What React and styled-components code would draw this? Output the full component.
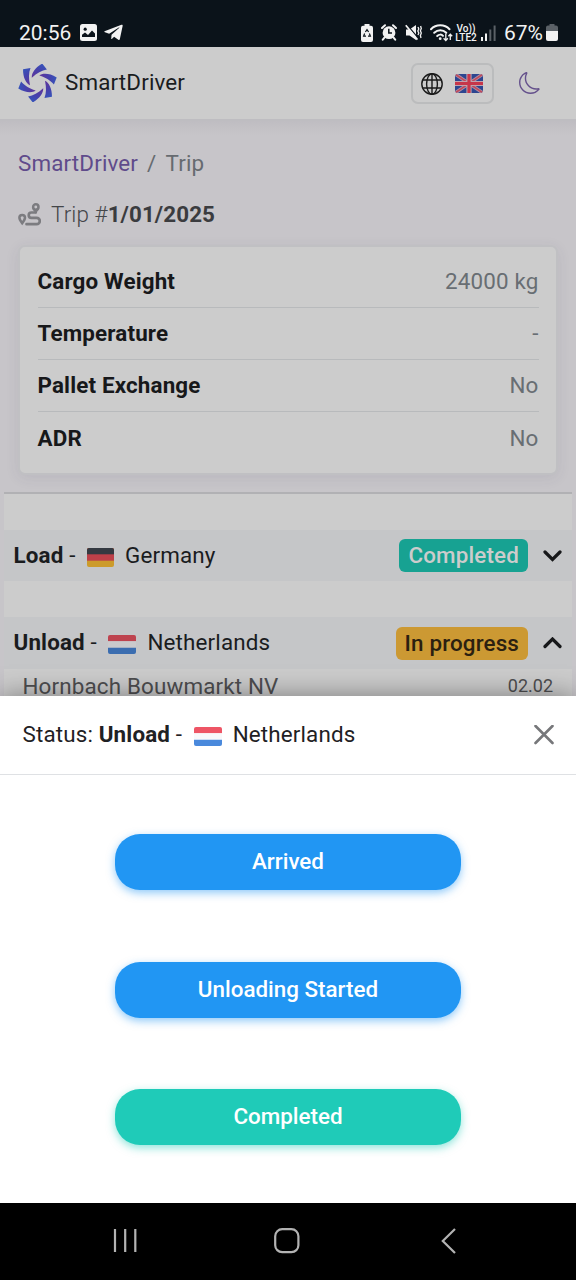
import React from "react";
import styled, { createGlobalStyle } from "styled-components";
import { FaTelegramPlane } from "react-icons/fa";
import { BsMoon } from "react-icons/bs";

const GlobalStyle = createGlobalStyle`
  * {
    box-sizing: border-box;
  }
  body {
    margin: 0;
    font-family: Roboto, sans-serif;
    font-size: 22.4px;
    letter-spacing: 0.15px;
    line-height: 1.5;
    color: #1a1c1e;
  }
`;

const Screen = styled.div`
  display: flex;
  flex-direction: column;
  width: 576px;
  height: 1280px;
  overflow: hidden;
`;

const StatusBar = styled.div`
  display: flex;
  align-items: center;
  flex: 0 0 47px;
  padding: 18px 18px 0 19px;
  background: #0b131a;
  color: #f2f2f2;
  font-size: 21px;
  letter-spacing: 0;
  line-height: 28px;
  svg {
    display: block;
    flex: none;
  }
`;

const Clock = styled.span`
  width: 61px;
`;

const StatusIcons = styled.div`
  display: flex;
  align-items: center;
  gap: ${({ gap }) => gap}px;
`;

const Battery = styled.div`
  display: flex;
  align-items: center;
  margin-left: auto;
  gap: 4px;
`;

const BatteryLevel = styled.span`
  width: 38px;
  margin-left: 4px;
`;

const Header = styled.header`
  display: flex;
  align-items: center;
  flex: 0 0 74px;
  padding: 0 35px 0 18px;
  background: #cccccc;
  border-bottom: 2px solid #bebdc1;
`;

const Brand = styled.span`
  margin-left: 8px;
`;

const LanguageButton = styled.button`
  display: flex;
  align-items: center;
  justify-content: space-between;
  width: 83px;
  height: 41px;
  margin-top: 1px;
  margin-left: auto;
  margin-right: 25px;
  padding: 0 9px 0 8px;
  background: transparent;
  border: 2px solid #bbbcbd;
  border-radius: 7px;
`;

const Content = styled.main`
  flex: 0 0 575px;
  overflow: hidden;
  background: linear-gradient(#bfbdc2, #c7c5c9 14px);
`;

const Breadcrumb = styled.nav`
  display: flex;
  gap: 9px;
  padding: 26px 18px 0;
  color: #666b70;
  a {
    color: #5f4b8b;
  }
`;

const TripTitle = styled.div`
  display: flex;
  align-items: center;
  padding: 17px 18px 0;
  letter-spacing: 0.1px;
  font-weight: 300;
  color: #444649;
  svg {
    margin-right: 10px;
  }
  b {
    font-weight: 700;
    color: #3b3c3f;
  }
`;

const Card = styled.section`
  height: 230px;
  margin: 14px 18px 0;
  padding: 8.5px 17.5px;
  background: #cccccc;
  border: 2px solid #c0c0c3;
  border-radius: 7px;
  box-shadow: 0 3px 14px rgba(60, 50, 90, 0.09);
`;

const CardRow = styled.div`
  display: flex;
  align-items: center;
  justify-content: space-between;
  height: 52.2px;
  border-bottom: 1.4px solid #b8babc;
  &:last-child {
    border-bottom: 0;
  }
  b {
    color: #17181a;
  }
  span {
    color: #686e73;
  }
`;

const Stops = styled.section`
  margin: 17px 4px 0;
  border-top: 2px solid #b1b1b4;
  background: #cccccc;
`;

const StopRow = styled.div`
  display: flex;
  align-items: center;
  height: ${({ height }) => height}px;
  margin-top: 36px;
  padding: 0 10px 0 9.5px;
  background: #c5c6c8;
`;

const Place = styled.span`
  display: flex;
  align-items: center;
  white-space: pre;
  svg {
    margin: 3px 11px 0 11.5px;
  }
`;

const Chip = styled.span`
  height: 33px;
  margin-left: auto;
  margin-right: 15px;
  padding: 0 9px;
  border-radius: 6px;
  font-weight: 500;
  line-height: 32px;
  background: ${({ tone }) => (tone === "done" ? "#17a292" : "#cc9933")};
  color: ${({ tone }) => (tone === "done" ? "#cccccc" : "#2b2010")};
`;

const StopDetails = styled.div`
  display: flex;
  align-items: center;
  justify-content: space-between;
  height: 27px;
  padding: 7px 19px 0 18.5px;
  line-height: 20px;
  color: #4e4e50;
  small {
    font-size: 18px;
    letter-spacing: 0;
  }
`;

const Sheet = styled.section`
  position: relative;
  flex: 0 0 507px;
  background: #ffffff;
  box-shadow: 0 0 26px rgba(0, 0, 0, 0.4);
`;

const SheetHeader = styled.div`
  display: flex;
  align-items: center;
  justify-content: space-between;
  height: 79px;
  padding: 0 22px 0 22.5px;
  border-bottom: 1.5px solid #dfe1e4;
  color: #1f2124;
`;

const Actions = styled.div`
  display: flex;
  flex-direction: column;
  align-items: center;
  gap: 71.7px;
  padding-top: 59px;
`;

const ActionButton = styled.button`
  width: 346px;
  height: 56px;
  padding: 0 0 2px;
  border: 0;
  border-radius: 25px;
  font: 500 22.4px Roboto, sans-serif;
  color: #ffffff;
  background: ${({ tone }) => (tone === "done" ? "#1fcbb8" : "#2196f3")};
  box-shadow: 0 3px 9px
    ${({ tone }) =>
      tone === "done" ? "rgba(31, 203, 184, 0.5)" : "rgba(33, 150, 243, 0.5)"};
`;

const NavBar = styled.footer`
  display: flex;
  align-items: center;
  justify-content: space-between;
  flex: 0 0 77px;
  padding: 0 120px 1px 113px;
  background: #000000;
`;

const blades = [0, 60, 120, 180, 240, 300];

const Logo = () => (
  <svg width="39" height="38" viewBox="-19.5 -19 39 38">
    <defs>
      <linearGradient id="blade" x1="1" y1="0" x2="0" y2="0">
        <stop offset="0" stopColor="#3655ba" />
        <stop offset="0.4" stopColor="#4442ad" />
        <stop offset="1" stopColor="#60359a" />
      </linearGradient>
    </defs>
    {blades.map((angle) => (
      <path
        key={angle}
        transform={`rotate(${angle})`}
        d="M1.8 -7.6 C5 -10 12 -10 19.2 -5.6 L16.4 1.4 C13 -2.8 8.5 -5.4 1.8 -7.6Z"
        fill="url(#blade)"
      />
    ))}
  </svg>
);

const GlobeIcon = () => (
  <svg width="22" height="22" viewBox="0 0 22 22">
    <g fill="none" stroke="#1a1a1a" strokeWidth="1.4">
      <circle cx="11" cy="11" r="10.2" />
      <ellipse cx="11" cy="11" rx="5.4" ry="10.2" />
      <path d="M11 0.8V21.2M1.7 7H20.3M1.7 15H20.3" />
    </g>
  </svg>
);

const FlagDe = () => (
  <svg width="27" height="19" viewBox="0 0 27 19">
    <clipPath id="de">
      <rect width="27" height="19" rx="2" />
    </clipPath>
    <g clipPath="url(#de)">
      <rect width="27" height="19" fill="#cc9b2b" />
      <rect width="27" height="12.7" fill="#bd4049" />
      <rect width="27" height="6.3" fill="#343941" />
    </g>
  </svg>
);

const FlagNl = ({ dim }) => (
  <svg width="28" height="19" viewBox="0 0 28 19">
    <path
      d="M2 0H26A2 2 0 0 1 28 2V6.3H0V2A2 2 0 0 1 2 0Z"
      fill={dim ? "#be434f" : "#ee5565"}
    />
    <rect y="6.3" width="28" height="6.4" fill={dim ? "#cacacc" : "#f8f8fa"} />
    <path
      d="M0 12.7H28V17A2 2 0 0 1 26 19H2A2 2 0 0 1 0 17Z"
      fill={dim ? "#3b6db0" : "#4a89dc"}
    />
  </svg>
);

const FlagGb = () => (
  <svg width="28" height="19" viewBox="0 0 28 19">
    <clipPath id="gb">
      <rect width="28" height="19" rx="3" />
    </clipPath>
    <g clipPath="url(#gb)">
      <rect width="28" height="19" fill="#2c4590" />
      <path d="M0 0L28 19M28 0L0 19" stroke="#b08fa2" strokeWidth="3.4" />
      <path d="M0 0L28 19M28 0L0 19" stroke="#c0485a" strokeWidth="1.5" />
      <path d="M14 0V19M0 9.5H28" stroke="#c0a3ae" strokeWidth="5.2" />
      <path d="M14 0V19M0 9.5H28" stroke="#c7364a" strokeWidth="3.2" />
    </g>
  </svg>
);

const RouteIcon = () => (
  <svg width="23" height="23" viewBox="0 0 23 23" fill="none" stroke="#7c7c80">
    <path
      d="M4.2 20.2C2.4 17.8 1.4 16.3 1.4 14.7A2.8 2.8 0 0 1 7 14.7C7 16.3 6 17.8 4.2 20.2Z"
      strokeWidth="2.5"
    />
    <circle cx="17.8" cy="4" r="2.7" strokeWidth="2.5" />
    <path
      d="M17.8 9.5H13.4A2.4 2.4 0 0 0 13.4 14.8H18.6A3.1 3.1 0 0 1 18.6 21.2H8.5"
      strokeWidth="2.7"
      strokeLinecap="round"
    />
    <path d="M15.6 6L17.8 9L20 6" strokeWidth="2" />
  </svg>
);

const Chevron = ({ up }) => (
  <svg width="19" height="13" viewBox="0 0 19 13">
    <path
      d={up ? "M2 9.5L9.5 2L17 9.5" : "M2 3L9.5 10.5L17 3"}
      fill="none"
      stroke="#17181a"
      strokeWidth="3.2"
      strokeLinecap="round"
    />
  </svg>
);

const CloseIcon = () => (
  <svg width="20" height="20" viewBox="0 0 20 20">
    <path
      d="M1.5 1L18.5 18M18.5 1L1.5 18"
      stroke="#76777a"
      strokeWidth="2.6"
      strokeLinecap="round"
    />
  </svg>
);

const GalleryIcon = () => (
  <svg width="17" height="17" viewBox="0 0 17 17">
    <rect width="17" height="17" rx="2.5" fill="#f2f2f2" />
    <circle cx="5.2" cy="5.2" r="1.6" fill="#0b131a" />
    <path d="M2 13V10.8L5 8.5L8 11L12 6.5L15 9.5V13Z" fill="#0b131a" />
  </svg>
);

const BatterySaverIcon = () => (
  <svg width="12" height="18" viewBox="0 0 12 18">
    <path
      d="M3.5 0H8.5V1.8H10A2 2 0 0 1 12 3.8V16A2 2 0 0 1 10 18H2A2 2 0 0 1 0 16V3.8A2 2 0 0 1 2 1.8H3.5Z"
      fill="#f2f2f2"
    />
    <path
      d="M4.4 8L6 5.6L7.6 8M8.4 9.5L9.4 12.2H7M5 12.2H2.6L3.6 9.5"
      fill="none"
      stroke="#0b131a"
      strokeWidth="1.2"
    />
  </svg>
);

const AlarmIcon = () => (
  <svg width="16" height="17" viewBox="0 0 16 17">
    <circle cx="8" cy="8.7" r="6.4" fill="#f2f2f2" />
    <path
      d="M1 4L4 1.2M15 4L12 1.2M3.4 13.6L1.8 15.6M12.6 13.6L14.2 15.6"
      stroke="#f2f2f2"
      strokeWidth="2"
      strokeLinecap="round"
    />
    <path d="M7.8 4.8V9H11" fill="none" stroke="#0b131a" strokeWidth="1.5" />
  </svg>
);

const MuteIcon = () => (
  <svg width="17" height="17" viewBox="0 0 17 17">
    <path d="M1 5.5H4.5L11 1V16L4.5 11.5H1Z" fill="#f2f2f2" />
    <path d="M1.4 0L13.4 14.5" stroke="#0b131a" strokeWidth="1.3" />
    <path d="M0.8 1.2L12.4 15.6" stroke="#f2f2f2" strokeWidth="1.7" />
    <path
      d="M13 3L13.8 5L12.8 7L13.8 9L13 11M15.6 2L16.3 4.5L15.4 6.8L16.3 9L15.4 11.5L16 14"
      fill="none"
      stroke="#f2f2f2"
      strokeWidth="1.3"
    />
  </svg>
);

const WifiIcon = () => (
  <svg width="23" height="18" viewBox="0 0 23 18">
    <g fill="none" stroke="#f2f2f2" strokeWidth="2" strokeLinecap="round">
      <path d="M1 5.2C6 0 14.5 0 19.5 5.2" />
      <path d="M4.2 8.8C7.8 5.3 12.8 5.3 16.3 8.8" />
      <path d="M7.2 12C9 10.2 11.6 10.2 13 11.8" />
    </g>
    <circle cx="10.2" cy="14.7" r="1.4" fill="#f2f2f2" />
    <path
      d="M15.8 9.5V16.5M13.6 14.3L15.8 16.6L17.8 14.3M20.3 16V10.5M18.4 12.3L20.3 10.2L22.2 12.3"
      fill="none"
      stroke="#f2f2f2"
      strokeWidth="1.3"
    />
  </svg>
);

const VolteBadge = styled.span`
  width: 22px;
  margin-right: 2px;
  font-size: 10px;
  font-weight: 500;
  line-height: 9px;
  text-align: center;
`;

const SignalIcon = () => (
  <svg width="15" height="16" viewBox="0 0 15 16">
    <path d="M1 12V16M5 8.5V16" stroke="#f2f2f2" strokeWidth="2" />
    <path d="M9.3 4.5V16M13.6 0.5V16" stroke="#5b6167" strokeWidth="2" />
  </svg>
);

const BatteryIcon = () => (
  <svg width="12" height="17" viewBox="0 0 12 17">
    <path
      d="M3.5 0H8.5V1.6H10A2 2 0 0 1 12 3.6V7H0V3.6A2 2 0 0 1 2 1.6H3.5Z"
      fill="#5b6167"
    />
    <path d="M0 7H12V15A2 2 0 0 1 10 17H2A2 2 0 0 1 0 15Z" fill="#f2f2f2" />
  </svg>
);

const RecentsIcon = () => (
  <svg width="24" height="26" viewBox="0 0 24 26">
    <path d="M2 1V24M12.2 1V24M22.3 1V24" stroke="#b3b3b3" strokeWidth="2.2" />
  </svg>
);

const HomeButton = styled.span`
  display: flex;
  margin-right: 5px;
`;

const HomeIcon = () => (
  <svg width="26" height="26" viewBox="0 0 26 26">
    <rect
      x="1.2"
      y="1.2"
      width="23.2"
      height="23"
      rx="7"
      fill="none"
      stroke="#b3b3b3"
      strokeWidth="2.2"
    />
  </svg>
);

const BackIcon = () => (
  <svg width="15" height="26" viewBox="0 0 15 26">
    <path
      d="M14 1L1.8 13L14 25"
      fill="none"
      stroke="#b3b3b3"
      strokeWidth="2.2"
    />
  </svg>
);

const cargo = [
  ["Cargo Weight", "24000 kg"],
  ["Temperature", "-"],
  ["Pallet Exchange", "No"],
  ["ADR", "No"],
];

const App = () => {
  return (
    <>
      <GlobalStyle />
      <Screen>
        <StatusBar>
          <Clock>20:56</Clock>
          <StatusIcons gap={6}>
            <GalleryIcon />
            <FaTelegramPlane size={21} />
          </StatusIcons>
          <Battery>
            <StatusIcons gap={8}>
              <BatterySaverIcon />
              <AlarmIcon />
              <MuteIcon />
              <StatusIcons gap={2}>
                <WifiIcon />
                <VolteBadge>
                  Vo))
                  <br />
                  LTE2
                </VolteBadge>
                <SignalIcon />
              </StatusIcons>
            </StatusIcons>
            <BatteryLevel>67%</BatteryLevel>
            <BatteryIcon />
          </Battery>
        </StatusBar>
        <Header>
          <Logo />
          <Brand>SmartDriver</Brand>
          <LanguageButton>
            <GlobeIcon />
            <FlagGb />
          </LanguageButton>
          <BsMoon size={22} color="#65518c" />
        </Header>
        <Content>
          <Breadcrumb>
            <a>SmartDriver</a>
            <span>/</span>
            <span>Trip</span>
          </Breadcrumb>
          <TripTitle>
            <RouteIcon />
            <span>
              Trip #<b>1/01/2025</b>
            </span>
          </TripTitle>
          <Card>
            {cargo.map(([name, value]) => (
              <CardRow key={name}>
                <b>{name}</b>
                <span>{value}</span>
              </CardRow>
            ))}
          </Card>
          <Stops>
            <StopRow height={51}>
              <Place>
                <b>Load</b> -<FlagDe />
                Germany
              </Place>
              <Chip tone="done">Completed</Chip>
              <Chevron />
            </StopRow>
            <StopRow height={52}>
              <Place>
                <b>Unload</b> -<FlagNl dim />
                Netherlands
              </Place>
              <Chip tone="progress">In progress</Chip>
              <Chevron up />
            </StopRow>
            <StopDetails>
              <span>Hornbach Bouwmarkt NV</span>
              <small>02.02</small>
            </StopDetails>
          </Stops>
        </Content>
        <Sheet>
          <SheetHeader>
            <Place>
              Status: <b>Unload</b> -<FlagNl />
              Netherlands
            </Place>
            <CloseIcon />
          </SheetHeader>
          <Actions>
            <ActionButton>Arrived</ActionButton>
            <ActionButton>Unloading Started</ActionButton>
            <ActionButton tone="done">Completed</ActionButton>
          </Actions>
        </Sheet>
        <NavBar>
          <RecentsIcon />
          <HomeButton>
            <HomeIcon />
          </HomeButton>
          <BackIcon />
        </NavBar>
      </Screen>
    </>
  );
};

export default App;
